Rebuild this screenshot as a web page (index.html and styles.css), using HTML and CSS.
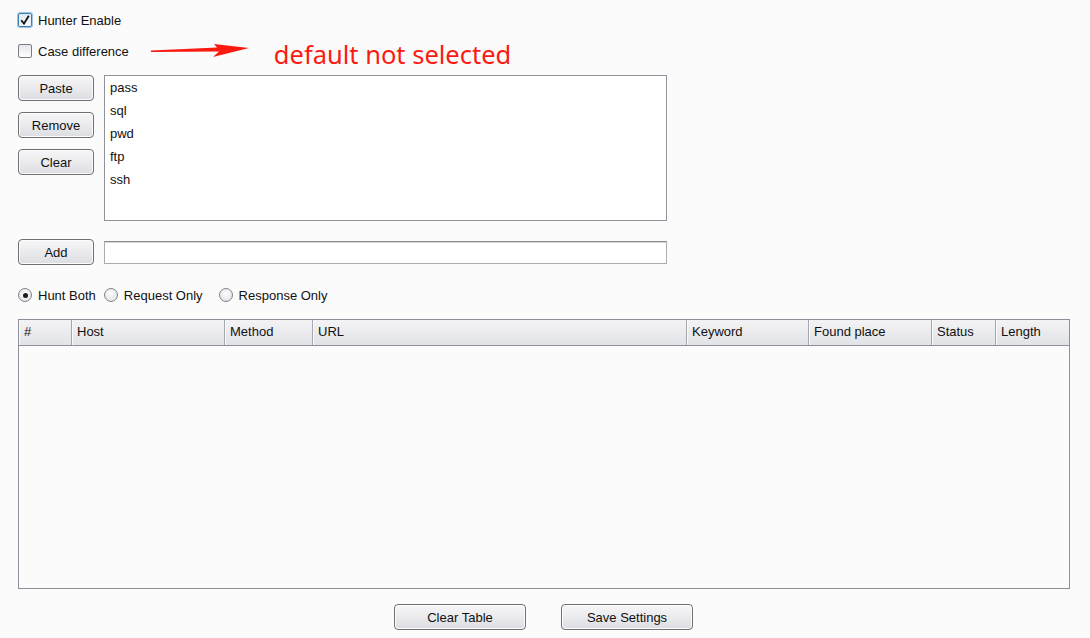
FILE: index.html
```html
<!DOCTYPE html>
<html>
<head>
<meta charset="utf-8">
<link rel="stylesheet" href="styles.css">
</head>
<body>
<div class="page">
  <div class="row check-row first">
    <span class="cb checked"><svg width="10" height="10" viewBox="0 0 10 10"><path d="M1.2 5.2 L4 8.6 L8.8 0.8" fill="none" stroke="#111" stroke-width="1.8"/></svg></span>
    <span class="lbl">Hunter Enable</span>
  </div>
  <div class="row check-row second">
    <span class="cb"></span>
    <span class="lbl">Case difference</span>
    <svg class="arrow" width="100" height="14" viewBox="0 0 100 14"><polygon points="0,6.5 66,3.5 63,0 98,4 62,13 68,7.5 0,8" fill="#fb1a12"/></svg>
    <span class="note">default not selected</span>
  </div>
  <div class="list-area">
    <div class="btn-col">
      <button class="btn small">Paste</button>
      <button class="btn small">Remove</button>
      <button class="btn small">Clear</button>
    </div>
    <div class="listbox">
      <div class="item">pass</div>
      <div class="item">sql</div>
      <div class="item">pwd</div>
      <div class="item">ftp</div>
      <div class="item">ssh</div>
    </div>
  </div>
  <div class="add-row">
    <button class="btn small">Add</button>
    <div class="input"></div>
  </div>
  <div class="radio-row">
    <span class="radio on"><span class="dot"></span></span><span class="rlbl r1">Hunt Both</span>
    <span class="radio"></span><span class="rlbl r2">Request Only</span>
    <span class="radio"></span><span class="rlbl">Response Only</span>
  </div>
  <div class="table">
    <div class="thead">
      <div class="th c1">#</div>
      <div class="th c2">Host</div>
      <div class="th c3">Method</div>
      <div class="th c4">URL</div>
      <div class="th c5">Keyword</div>
      <div class="th c6">Found place</div>
      <div class="th c7">Status</div>
      <div class="th c8">Length</div>
    </div>
    <div class="tbody"></div>
  </div>
  <div class="bottom">
    <button class="btn wide">Clear Table</button>
    <button class="btn wide">Save Settings</button>
  </div>
</div>
</body>
</html>
```
FILE: styles.css
```css
html, body {
  margin: 0;
  padding: 0;
  background: #fbfbfb;
}
body {
  font-family: "Liberation Sans", Arial, sans-serif;
  font-size: 13px;
  color: #111;
  width: 1090px;
  height: 638px;
  overflow: hidden;
}
.page {
  padding: 12px 0 0 18px;
}
.row {
  display: flex;
  align-items: center;
  height: 16px;
}
.second {
  margin-top: 15px;
  height: 16px;
}
.cb {
  width: 12px;
  height: 12px;
  border: 1px solid #7a7d86;
  border-radius: 2px;
  background: linear-gradient(#e6e7ea, #fdfdfd);
  display: flex;
  align-items: center;
  justify-content: center;
  box-sizing: content-box;
}
.cb.checked {
  border-color: #3c7fb1;
  box-shadow: 0 0 0 1px #9fc3e0;
  background: linear-gradient(#dfe9f3, #f6f9fc);
}
.lbl {
  margin-left: 6px;
}
.arrow {
  margin-left: 22px;
  margin-top: 0;
}
.note {
  margin-left: 23px;
  margin-top: 5px;
  color: #fb1a12;
  font-family: "Noto Sans", "Open Sans", sans-serif;
  font-size: 25.5px;
  line-height: 26px;
}
.list-area {
  display: flex;
  margin-top: 16px;
  gap: 10px;
}
.btn-col {
  display: flex;
  flex-direction: column;
  gap: 11px;
}
.btn {
  font-family: "Liberation Sans", Arial, sans-serif;
  font-size: 13px;
  color: #111;
  height: 26px;
  border: 1px solid #707070;
  border-radius: 4px;
  background: linear-gradient(#f6f6f8 0%, #ececef 45%, #dcdde2 100%);
  padding: 0;
  margin: 0;
  box-shadow: inset 0 0 0 1px #fcfcfc;
}
.btn.small {
  width: 76px;
}
.btn.wide {
  width: 132px;
}
.listbox {
  width: 563px;
  height: 146px;
  border: 1px solid #8e939c;
  background: #fff;
  padding-top: 4px;
  box-sizing: border-box;
}
.item {
  height: 23px;
  line-height: 16px;
  padding-left: 5px;
}
.add-row {
  display: flex;
  align-items: center;
  margin-top: 18px;
  gap: 10px;
}
.input {
  width: 563px;
  height: 23px;
  box-sizing: border-box;
  border: 1px solid #acacac;
  border-top-color: #8a8a8a;
  box-shadow: inset 0 1px 0 #d8d8d8;
  background: #fff;
}
.radio-row {
  display: flex;
  align-items: center;
  margin-top: 22px;
  height: 16px;
}
.radio {
  width: 12px;
  height: 12px;
  border-radius: 50%;
  border: 1px solid #7f838b;
  background: radial-gradient(circle at 50% 40%, #fdfdfd, #dcdde1);
  display: flex;
  align-items: center;
  justify-content: center;
}
.radio .dot {
  width: 5px;
  height: 5px;
  border-radius: 50%;
  background: #1a1a1a;
}
.rlbl {
  margin-left: 6px;
}
.r1 { margin-right: 8px; }
.r2 { margin-right: 16px; }
.table {
  margin-top: 16px;
  width: 1052px;
  height: 270px;
  box-sizing: border-box;
  border: 1px solid #8e8f99;
  background: #fbfbfb;
  display: flex;
  flex-direction: column;
}
.thead {
  display: flex;
  height: 25px;
  border-bottom: 1px solid #8e8f99;
  background: linear-gradient(#f3f3f5, #e2e3e7);
}
.th {
  box-sizing: border-box;
  border-right: 1px solid #a5a7b0;
  padding-left: 5px;
  line-height: 24px;
  box-shadow: inset 1px 0 0 #fafafa;
}
.c1 { width: 53px; }
.c2 { width: 153px; }
.c3 { width: 88px; }
.c4 { width: 374px; }
.c5 { width: 122px; }
.c6 { width: 123px; }
.c7 { width: 64px; }
.c8 { flex: 1; border-right: none; }
.tbody { flex: 1; }
.bottom {
  display: flex;
  gap: 35px;
  margin-top: 15px;
  padding-left: 376px;
}
```
